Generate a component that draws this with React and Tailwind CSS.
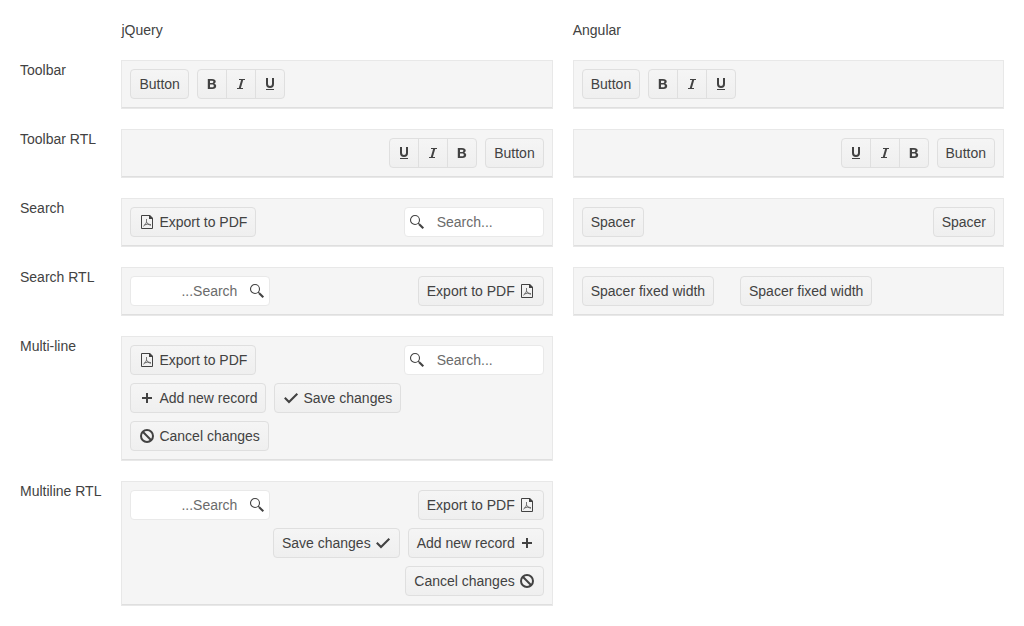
import React from "react";

function Svg({ children }) {
  return (
    <svg className="size-4 shrink-0" viewBox="0 0 16 16" fill="none" stroke="currentColor">
      {children}
    </svg>
  );
}

const PdfIcon = () => (
  <Svg>
    <path d="M10.5 1.5H2.5V14.5H13.5V4.5" />
    <path d="M10 1H11L14 4V5H10Z" fill="currentColor" stroke="none" />
    <path d="M7.5 5V7.6C7.5 9 6 11 4.3 12.3M7.5 7.6C8 9.3 9.6 11 12 11.2M5.2 11.2C7.2 10.2 10 9.8 12 10.8" strokeWidth="0.7" />
  </Svg>
);

const SearchIcon = () => (
  <Svg>
    <circle cx="6" cy="6" r="4.5" strokeWidth="1.1" />
    <path d="M9.2 9.2L10.7 10.7" strokeWidth="1.2" />
    <path d="M10.2 10.2L14.3 14.3" strokeWidth="2.1" />
  </Svg>
);

const PlusIcon = () => (
  <Svg>
    <path d="M8 3V13M3 8H13" strokeWidth="2" />
  </Svg>
);

const CheckIcon = () => (
  <Svg>
    <path d="M1.8 7.8L6 12L14.3 3.7" strokeWidth="2.1" />
  </Svg>
);

const CancelIcon = () => (
  <Svg>
    <circle cx="8" cy="8" r="6" strokeWidth="2" />
    <path d="M3.8 3.8L12.2 12.2" strokeWidth="2" />
  </Svg>
);

const BoldIcon = () => (
  <Svg>
    <path
      d="M3.8 3H8C10.4 3 11.7 4 11.7 5.6C11.7 6.6 11.1 7.4 10.2 7.7C11.4 8 12.2 8.9 12.2 10.1C12.2 11.9 10.8 13 8.4 13H3.8ZM6 4.7V7H7.6C8.7 7 9.4 6.6 9.4 5.8C9.4 5 8.7 4.7 7.6 4.7ZM6 8.6V11.3H8C9.2 11.3 9.8 10.8 9.8 9.9C9.8 9.1 9.2 8.6 8 8.6Z"
      fill="currentColor"
      fillRule="evenodd"
      stroke="none"
    />
  </Svg>
);

const ItalicIcon = () => (
  <Svg>
    <path d="M6 3.5H12M4 12.5H10" />
    <path d="M9.3 3.5L6.7 12.5" strokeWidth="2" />
  </Svg>
);

const UnderlineIcon = () => (
  <Svg>
    <path d="M5 2V8C5 9.9 6.2 10.9 8 10.9S11 9.9 11 8V2" strokeWidth="2" />
    <path d="M4 13.5H12" />
  </Svg>
);

function Button({ icon, children }) {
  return (
    <button className="flex h-[30px] shrink-0 items-center gap-1 whitespace-nowrap rounded border border-[#dfdfdf] bg-linear-to-b from-[#f5f5f5] to-[#efefef] px-2 leading-5">
      {icon}
      {children}
    </button>
  );
}

const formats = [
  ["Bold", <BoldIcon />],
  ["Italic", <ItalicIcon />],
  ["Underline", <UnderlineIcon />],
];

function FormatGroup() {
  return (
    <div className="flex h-[30px] divide-x divide-[#dfdfdf] rounded border border-[#dfdfdf] bg-linear-to-b from-[#f5f5f5] to-[#efefef]">
      {formats.map(([name, icon]) => (
        <button key={name} aria-label={name} className="box-content flex w-7 items-center justify-center">
          {icon}
        </button>
      ))}
    </div>
  );
}

function Search() {
  return (
    <div className="ms-auto flex h-[30px] w-[140px] items-center rounded border border-[#e9e9e9] bg-white ps-1">
      <SearchIcon />
      <input
        className="w-full min-w-0 bg-transparent ps-3 pe-2 leading-5 outline-none placeholder:text-[#6b6b6b]"
        placeholder="Search..."
      />
    </div>
  );
}

function Toolbar({ rtl, children }) {
  return (
    <div dir={rtl ? "rtl" : "ltr"} className="border border-[#e8e8e8]">
      <div className="flex flex-wrap gap-2 border-b border-[#dfdfdf] bg-[#f5f5f5] p-2">{children}</div>
    </div>
  );
}

const Basic = () => (
  <>
    <Button>Button</Button>
    <FormatGroup />
  </>
);

const ExportSearch = () => (
  <>
    <Button icon={<PdfIcon />}>Export to PDF</Button>
    <Search />
  </>
);

const MultiLine = () => (
  <>
    <ExportSearch />
    <Button icon={<PlusIcon />}>Add new record</Button>
    <Button icon={<CheckIcon />}>Save changes</Button>
    <Button icon={<CancelIcon />}>Cancel changes</Button>
  </>
);

export default function App() {
  return (
    <main className="grid w-full grid-cols-[81.42px_minmax(0,1fr)_minmax(0,1fr)] gap-5 whitespace-nowrap bg-white p-5 font-['Liberation_Sans',Arial,sans-serif] text-sm leading-5 text-[#424242]">
      <span />
      <span>jQuery</span>
      <span>Angular</span>

      <span>Toolbar</span>
      <Toolbar><Basic /></Toolbar>
      <Toolbar><Basic /></Toolbar>

      <span>Toolbar RTL</span>
      <Toolbar rtl><Basic /></Toolbar>
      <Toolbar rtl><Basic /></Toolbar>

      <span>Search</span>
      <Toolbar><ExportSearch /></Toolbar>
      <Toolbar>
        <Button>Spacer</Button>
        <span className="grow" />
        <Button>Spacer</Button>
      </Toolbar>

      <span>Search RTL</span>
      <Toolbar rtl><ExportSearch /></Toolbar>
      <Toolbar>
        <Button>Spacer fixed width</Button>
        <span className="w-[9.9px]" />
        <Button>Spacer fixed width</Button>
      </Toolbar>

      <span>Multi-line</span>
      <Toolbar><MultiLine /></Toolbar>
      <span />

      <span>Multiline RTL</span>
      <Toolbar rtl><MultiLine /></Toolbar>
      <span />
    </main>
  );
}
